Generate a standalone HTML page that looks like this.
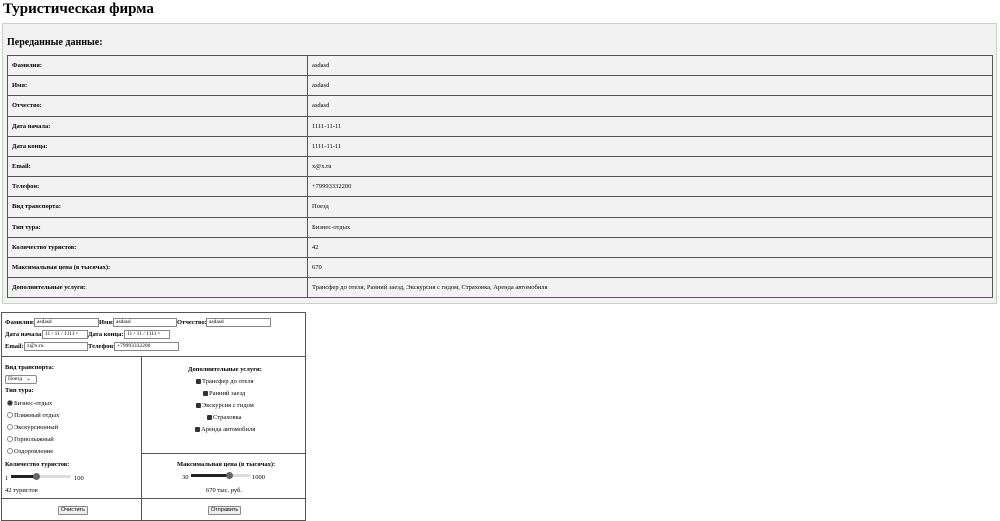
<!DOCTYPE html><html><head><meta charset="utf-8"><style>
body{margin:0;width:1000px;height:521px;overflow:hidden;background:#fff;font-family:"Liberation Serif",serif;color:#000;position:relative}
.a{position:absolute;white-space:nowrap}
h1{position:absolute;left:3px;top:1px;margin:0;font-size:15px}
.box{position:absolute;left:2px;top:23px;width:993px;height:279px;border:1px solid #b7dcb7;background:#f2f2f2}
table{position:absolute;left:7px;top:55px;width:986px;border-collapse:collapse;font-size:6.5px}
td{border:1px solid #555;height:19.2px;padding:0 4px}
td:first-child{font-weight:bold;width:291px}
.f{font-size:6.5px}
.in{position:absolute;height:7px;border:1px solid #888;font-size:5.5px;line-height:7px;padding-left:2px;background:#fff}
.ln{position:absolute;background:#555}
.cb{display:inline-block;width:5px;height:5px;background:#333;border-radius:1px;margin-right:1px;vertical-align:-1px}
.rb{display:inline-block;width:4px;height:4px;border:1px solid #888;border-radius:50%;margin-right:1px;vertical-align:-1px}
.btn{position:absolute;border:1px solid #888;background:#eee;font-family:"Liberation Sans",sans-serif;font-size:5.5px;padding:0 2px;height:7px;line-height:7px;border-radius:1px}
.tr{position:absolute;height:3px;background:#ddd;border-radius:2px}
</style></head><body>
<h1>Туристическая фирма</h1>
<div class="box"></div>
<div class="a" style="left:7px;top:37px;font-size:10px;font-weight:bold">Переданные данные:</div>
<table>
<tr><td>Фамилия:</td><td>asdasd</td></tr>
<tr><td>Имя:</td><td>asdasd</td></tr>
<tr><td>Отчество:</td><td>asdasd</td></tr>
<tr><td>Дата начала:</td><td>1111-11-11</td></tr>
<tr><td>Дата конца:</td><td>1111-11-11</td></tr>
<tr><td>Email:</td><td>x@x.ru</td></tr>
<tr><td>Телефон:</td><td>+79993332200</td></tr>
<tr><td>Вид транспорта:</td><td>Поезд</td></tr>
<tr><td>Тип тура:</td><td>Бизнес-отдых</td></tr>
<tr><td>Количество туристов:</td><td>42</td></tr>
<tr><td>Максимальная цена (в тысячах):</td><td>670</td></tr>
<tr><td>Дополнительные услуги:</td><td>Трансфер до отеля, Ранний заезд, Экскурсия с гидом, Страховка, Аренда автомобиля</td></tr>
</table>
<div style="position:absolute;left:1px;top:312px;width:303px;height:207px;border:1px solid #555"></div>
<div class="ln" style="left:1px;top:356px;width:304px;height:1px"></div>
<div class="ln" style="left:141px;top:356px;width:1px;height:164px"></div>
<div class="ln" style="left:141px;top:453px;width:164px;height:1px"></div>
<div class="ln" style="left:1px;top:498px;width:304px;height:1px"></div>
<div class="a f" style="left:5px;top:319px;font-weight:bold">Фамилия:</div><div class="in" style="left:34px;top:318px;width:61px">asdasd</div>
<div class="a f" style="left:99px;top:319px;font-weight:bold">Имя:</div><div class="in" style="left:113px;top:318px;width:60px">asdasd</div>
<div class="a f" style="left:177px;top:319px;font-weight:bold">Отчество:</div><div class="in" style="left:206px;top:318px;width:61px">asdasd</div>
<div class="a f" style="left:5px;top:331px;font-weight:bold">Дата начала:</div><div class="in" style="left:42px;top:330px;width:42px">11 / 11 / 1111 ▫</div>
<div class="a f" style="left:88px;top:331px;font-weight:bold">Дата конца:</div><div class="in" style="left:124px;top:330px;width:42px">11 / 11 / 1111 ▫</div>
<div class="a f" style="left:5px;top:343px;font-weight:bold">Email:</div><div class="in" style="left:24px;top:342px;width:60px">x@x.ru</div>
<div class="a f" style="left:88px;top:343px;font-weight:bold">Телефон:</div><div class="in" style="left:114px;top:342px;width:61px">+79993332200</div>
<div class="a f" style="left:5px;top:364px;font-weight:bold">Вид транспорта:</div>
<div class="in" style="left:5px;top:375px;width:28px;border-radius:2px">Поезд &nbsp;&nbsp;⌄</div>
<div class="a f" style="left:5px;top:387px;font-weight:bold">Тип тура:</div>
<div class="a f" style="left:7px;top:400px"><span class="rb" style="background:#333"></span>Бизнес-отдых</div>
<div class="a f" style="left:7px;top:412px"><span class="rb"></span>Пляжный отдых</div>
<div class="a f" style="left:7px;top:424px"><span class="rb"></span>Экскурсионный</div>
<div class="a f" style="left:7px;top:436px"><span class="rb"></span>Горнолыжный</div>
<div class="a f" style="left:7px;top:448px"><span class="rb"></span>Оздоровление</div>
<div class="a f" style="left:5px;top:461px;font-weight:bold">Количество туристов:</div>
<div class="a f" style="left:5px;top:475px">1</div><div class="tr" style="left:11px;top:475px;width:60px"></div><div class="ln" style="left:11px;top:475px;width:25px;height:3px;background:#222"></div><div style="position:absolute;left:33px;top:473px;width:7px;height:7px;border-radius:50%;background:#666"></div><div class="a f" style="left:74px;top:475px">100</div>
<div class="a f" style="left:5px;top:487px">42 туристов</div>
<div class="a f" style="left:188px;top:366px;font-weight:bold">Дополнительные услуги:</div>
<div class="a f" style="left:196px;top:378px"><span class="cb"></span>Трансфер до отеля</div>
<div class="a f" style="left:203px;top:390px"><span class="cb"></span>Ранний заезд</div>
<div class="a f" style="left:196px;top:402px"><span class="cb"></span>Экскурсия с гидом</div>
<div class="a f" style="left:207px;top:414px"><span class="cb"></span>Страховка</div>
<div class="a f" style="left:195px;top:426px"><span class="cb"></span>Аренда автомобиля</div>
<div class="a f" style="left:177px;top:461px;font-weight:bold">Максимальная цена (в тысячах):</div>
<div class="a f" style="left:182px;top:474px">30</div><div class="tr" style="left:191px;top:474px;width:60px"></div><div class="ln" style="left:191px;top:474px;width:38px;height:3px;background:#222"></div><div style="position:absolute;left:226px;top:472px;width:7px;height:7px;border-radius:50%;background:#666"></div><div class="a f" style="left:252px;top:474px">1000</div>
<div class="a f" style="left:206px;top:487px">670 тыс. руб.</div>
<div class="btn" style="left:58px;top:506px">Очистить</div>
<div class="btn" style="left:208px;top:506px">Отправить</div>
</body></html>
